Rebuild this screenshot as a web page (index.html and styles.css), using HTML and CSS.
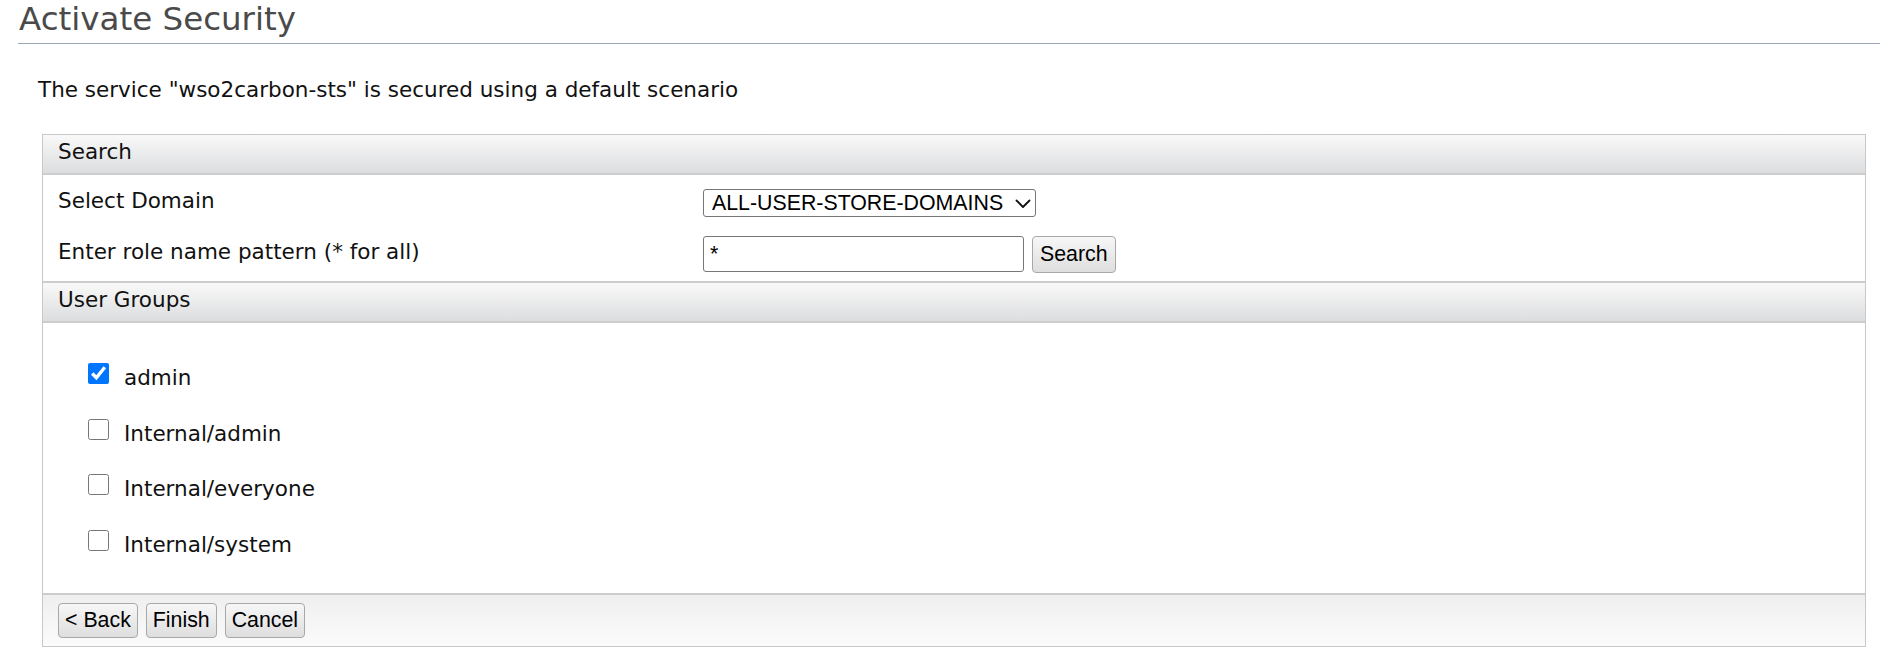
FILE: index.html
```html
<!DOCTYPE html>
<html>
<head>
<meta charset="utf-8">
<title>Activate Security</title>
<link rel="stylesheet" href="styles.css">
</head>
<body>
<h1 class="title">Activate Security</h1>
<p class="intro">The service "wso2carbon-sts" is secured using a default scenario</p>
<div class="panel">
  <div class="sec-head">Search</div>
  <div class="search-body">
    <div class="label">Select Domain</div>
    <div class="ctrl">
      <span class="select-wrap">
        <select class="domain">
          <option>ALL-USER-STORE-DOMAINS</option>
        </select>
        <svg class="chev" width="16" height="10" viewBox="0 0 16 10" aria-hidden="true">
          <path d="M1.5 1.5 L8 8 L14.5 1.5" fill="none" stroke="#111" stroke-width="1.8" stroke-linecap="round" stroke-linejoin="round"/>
        </svg>
      </span>
    </div>
    <div class="label">Enter role name pattern (* for all)</div>
    <div class="ctrl">
      <input class="pattern" type="text" value="*">
      <button class="btn" type="button">Search</button>
    </div>
  </div>
  <div class="sec-head sec-head-2">User Groups</div>
  <div class="groups">
    <label class="group"><input type="checkbox" checked><span>admin</span></label>
    <label class="group"><input type="checkbox"><span>Internal/admin</span></label>
    <label class="group"><input type="checkbox"><span>Internal/everyone</span></label>
    <label class="group"><input type="checkbox"><span>Internal/system</span></label>
  </div>
  <div class="footer">
    <button class="btn" type="button">&lt; Back</button>
    <button class="btn" type="button">Finish</button>
    <button class="btn" type="button">Cancel</button>
  </div>
</div>
</body>
</html>
```
FILE: styles.css
```css
html, body {
  margin: 0;
  padding: 0;
  background: #ffffff;
}
body {
  font-family: "DejaVu Sans", Verdana, sans-serif;
  font-size: 21.5px;
  color: #111111;
}
.title {
  margin: 1px 2px 0 18px;
  padding: 0 0 5px 1px;
  font-size: 32.5px;
  line-height: 37px;
  font-weight: normal;
  color: #4a4a4a;
  border-bottom: 1px solid #9ba8b9;
}
.intro {
  margin: 33px 0 0 38px;
  line-height: 25px;
}
.panel {
  margin: 32px 16px 0 42px;
  border: 1px solid #c8c8c8;
}
.sec-head {
  height: 33px;
  line-height: 33px;
  padding: 0 0 5px 15px;
  background: linear-gradient(#f9f9f9, #dcdddf);
  border-bottom: 2px solid #cdcdcd;
}
.sec-head-2 {
  border-top: 2px solid #cdcdcd;
}
.search-body {
  display: grid;
  grid-template-columns: 660px 1fr;
  grid-template-rows: 28px 36px;
  row-gap: 19px;
  align-items: center;
  padding: 14px 0 9px;
}
.label {
  padding: 0 0 5px 15px;
  line-height: 25px;
}
.ctrl {
  display: flex;
  align-items: center;
}
.select-wrap {
  position: relative;
  display: inline-block;
  height: 28px;
}
.domain {
  font-family: "Liberation Sans", Arial, sans-serif;
  font-size: 21.33px;
  width: 333px;
  height: 28px;
  padding: 0 28px 0 8px;
  margin: 0;
  color: #000;
  background: #fff;
  border: 1px solid #767676;
  border-radius: 3px;
  appearance: none;
  -webkit-appearance: none;
  display: block;
}
.chev {
  position: absolute;
  right: 5px;
  top: 10px;
  pointer-events: none;
}
.pattern {
  font-family: "Liberation Sans", Arial, sans-serif;
  font-size: 21.33px;
  width: 321px;
  height: 36px;
  box-sizing: border-box;
  padding: 0 6px;
  margin: 0;
  color: #000;
  border: 1px solid #767676;
  border-radius: 3px;
}
.btn {
  font-family: "Liberation Sans", Arial, sans-serif;
  font-size: 21.33px;
  color: #000;
  height: 36px;
  padding: 0 6px;
  margin: 0;
  background: linear-gradient(#f7f7f7, #dedede);
  border: 1px solid #a8a8a8;
  border-radius: 4px;
}
.ctrl .btn {
  margin-left: 8px;
  height: 37px;
  padding: 0 7px;
}
.groups {
  display: flex;
  flex-direction: column;
  gap: 29.5px;
  padding: 40px 0 37px 45px;
}
.group {
  display: flex;
  align-items: flex-start;
  height: 26px;
}
.group input {
  width: 21px;
  height: 21px;
  margin: 0;
}
.group span {
  margin-left: 15px;
  padding-top: 2px;
  line-height: 25px;
}
.footer {
  display: flex;
  gap: 8px;
  padding: 8px 0 8px 15px;
  border-top: 2px solid #cdcdcd;
  background: linear-gradient(#efefef, #fbfbfb);
}
.footer .btn {
  height: 35px;
}
```
